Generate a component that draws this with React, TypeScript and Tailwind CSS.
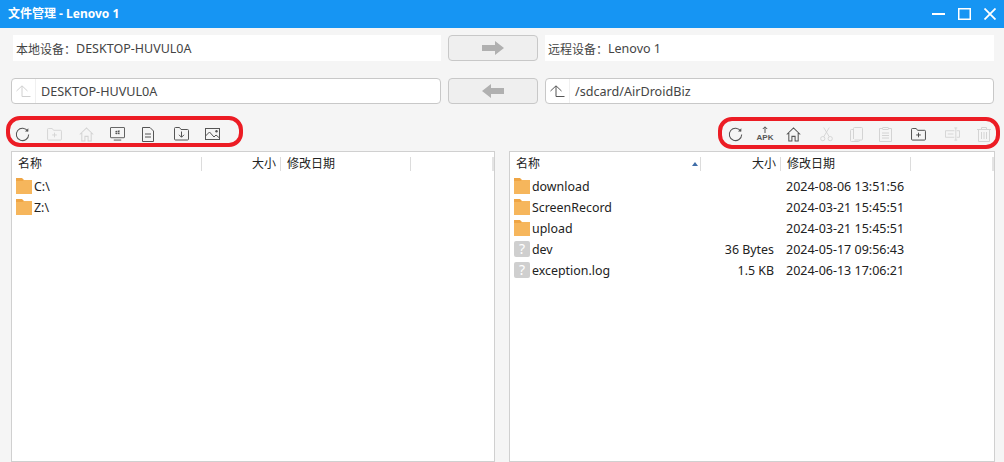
import React from 'react';

const font = { fontFamily: '"Noto Sans", "Noto Sans CJK SC", sans-serif' };

const Folder = () => (
  <svg width="16" height="16" viewBox="0 0 16 16" className="shrink-0">
    <path d="M0 0h6l2 2h8v14H0z" fill="#efa544" />
    <path d="M0 3h6.500l1.500-1h8v14H0z" fill="#f6b65c" />
  </svg>
);

const Unknown = () => (
  <div className="w-4 h-4 shrink-0 rounded-[2px] bg-[#cfcfcf] text-white text-[14px] leading-4 text-center">?</div>
);

const Refresh = () => (
  <svg width="15" height="15" viewBox="0 0 16 16" fill="none" stroke="#555" strokeWidth="1.1">
    <path d="M13.600 4.400A6.600 6.600 0 1 0 14.600 8" />
    <path d="M10.600 4.800h3.600V1.200z" fill="#555" stroke="none" />
  </svg>
);

const FolderPlus = ({ c }: { c: string }) => (
  <svg width="15" height="13" viewBox="0 0 16 14" fill="none" stroke={c} strokeWidth="1">
    <path d="M.5 12V1.500a1 1 0 0 1 1-1h4l1.500 2h7.500a1 1 0 0 1 1 1V12a1 1 0 0 1-1 1h-13a1 1 0 0 1-1-1z" />
    <path d="M5.500 7.500h5M8 5v5" />
  </svg>
);

const Home = ({ c }: { c: string }) => (
  <svg width="15" height="15" viewBox="0 0 16 16" fill="none" stroke={c} strokeWidth="1.1">
    <path d="M.8 8 8 1l7.200 7M3 6.500v8.500h3.300v-5h3.400v5H13V6.500" />
  </svg>
);

const Monitor = () => (
  <svg width="15" height="14" viewBox="0 0 16 15" fill="none" stroke="#555" strokeWidth="1">
    <rect x=".5" y=".5" width="15" height="11" rx=".5" />
    <path d="M4 14h8" />
    <path d="M5.800 4.200 7.600 4v1.600H5.800zM8.200 3.900l2-.3v2H8.200zM5.800 6.200h1.800v1.500L5.800 7.400zM8.200 6.200h2v1.700l-2-.3z" fill="#555" stroke="none" />
  </svg>
);

const Doc = () => (
  <svg width="12" height="15" viewBox="0 0 12 15" fill="none" stroke="#555" strokeWidth="1">
    <path d="M.5.500h7.500l3.500 3.500v10.500H.5z" />
    <path d="M3 7h6M3 10h6" />
  </svg>
);

const FolderDown = () => (
  <svg width="15" height="14" viewBox="0 0 15 14" fill="none" stroke="#555" strokeWidth="1">
    <path d="M.5 12V1.500a1 1 0 0 1 1-1h4l1.500 2h6.500a1 1 0 0 1 1 1V12a1 1 0 0 1-1 1h-12a1 1 0 0 1-1-1z" />
    <path d="M7.500 4.500v5.500M5 7.800l2.500 2.500L10 7.800" />
  </svg>
);

const Picture = () => (
  <svg width="15" height="12" viewBox="0 0 15 12" fill="none" stroke="#555" strokeWidth="1">
    <rect x=".5" y=".5" width="14" height="11" />
    <path d="M.5 8 4.500 4l4.500 5 2-2 3.500 3" />
    <circle cx="11.500" cy="3.200" r="1.200" fill="#555" stroke="none" />
  </svg>
);

const Apk = () => (
  <div className="w-[16px] h-[16px] flex flex-col items-center justify-end leading-none">
    <svg width="6" height="7" viewBox="0 0 6 7" fill="none" stroke="#555" strokeWidth="1">
      <path d="M3 7V1M.8 3 3 .8 5.200 3" />
    </svg>
    <span className="text-[8px] font-bold text-[#555] font-['Liberation_Sans'] mt-[1px]">APK</span>
  </div>
);

const Scissors = () => (
  <svg width="13" height="16" viewBox="0 0 14 16" fill="none" stroke="#d4d4d4" strokeWidth="1">
    <circle cx="3" cy="13" r="2.300" />
    <circle cx="11" cy="13" r="2.300" />
    <path d="M4 11 10 1M10 11 4 1" />
  </svg>
);

const Copy = () => (
  <svg width="13" height="15" viewBox="0 0 13 15" fill="none" stroke="#d4d4d4" strokeWidth="1">
    <path d="M3.500 12V1.500a1 1 0 0 1 1-1h7a1 1 0 0 1 1 1V12a1 1 0 0 1-1 1h-7" />
    <path d="M3.500 2.500h-2a1 1 0 0 0-1 1v10a1 1 0 0 0 1 1h7a1 1 0 0 0 1-1V13" />
  </svg>
);

const Paste = () => (
  <svg width="13" height="15" viewBox="0 0 13 15" fill="none" stroke="#d4d4d4" strokeWidth="1">
    <path d="M4 1.500H.5v13h12v-13H9" />
    <rect x="4" y=".5" width="5" height="2" />
    <path d="M3 6h7M3 8.500h7M3 11h7" />
  </svg>
);

const Rename = () => (
  <svg width="15" height="14" viewBox="0 0 16 14" fill="none" stroke="#d4d4d4" strokeWidth="1">
    <path d="M10 3.500H.5v7H10M12.500 3.500h3v7h-3" />
    <path d="M11.500 .5v13M10 .5h3M10 13.500h3M3 7h6" />
  </svg>
);

const Trash = () => (
  <svg width="14" height="15" viewBox="0 0 14 15" fill="none" stroke="#d4d4d4" strokeWidth="1">
    <path d="M0 2.500h14M4.500 2.500V.5h5v2M1.500 2.500v12h11v-12M4.500 5v7M7 5v7M9.500 5v7" />
  </svg>
);

const UpArrow = ({ c }: { c: string }) => (
  <svg width="15" height="12" viewBox="0 0 15 12" fill="none" stroke={c} strokeWidth="1">
    <path d="M.5 6 6 .8 11.500 6M6 1v10.500h8.500" />
  </svg>
);

const PathBox = ({ icon, text, w }: { icon: string; text: string; w: string }) => (
  <div className={`${w} h-[26px] flex items-center bg-white border border-[#c8c8c8] rounded-[4px]`}>
    <div className="w-[24px] h-full flex items-center justify-center border-r border-[#f0f0f0]">
      <UpArrow c={icon} />
    </div>
    <span className="ml-[5px] pt-[3px] text-[12.6px] text-[#444]">{text}</span>
  </div>
);

const BigArrow = ({ left }: { left?: boolean }) => (
  <button className="w-[90px] h-[26px] flex items-center justify-center bg-[#efefef] border border-[#c8c8c8] rounded-[4px]">
    <svg width="22" height="14" viewBox="0 0 22 14" className={left ? 'rotate-180' : ''}>
      <path d="M0 4h13V0l9 7-9 7v-4H0z" fill="#b0b0b0" />
    </svg>
  </button>
);

const Header = ({ sorted, size }: { sorted?: boolean; size: string }) => (
  <div className="flex h-[24px] pb-[1px] items-center text-[12px] text-[#222]">
    <div className="relative flex-1 h-[14px] flex items-center pl-[6px] border-r border-[#dcdcdc]">
      名称
      {sorted && <span className="absolute right-[2px] top-[5px] w-0 h-0 border-x-[3px] border-x-transparent border-b-[4px] border-b-[#3f6da8]" />}
    </div>
    <div className={`${size} h-[14px] flex items-center justify-end pr-[4px] border-r border-[#dcdcdc]`}>大小</div>
    <div className="w-[130px] h-[14px] flex items-center pl-[6px] border-r border-[#dcdcdc]">修改日期</div>
    <div className="w-[83px] h-[14px] border-r-2 border-[#e4e4e4]" />
  </div>
);

const Row = ({ name, file, size, date }: { name: string; file?: boolean; size?: string; date?: string }) => (
  <div className="flex h-[21px] items-center text-[12.4px] text-[#222]">
    <div className="flex-1 flex items-center gap-[2px] pl-[4px]">
      {file ? <Unknown /> : <Folder />}
      <span className="pt-[2px]">{name}</span>
    </div>
    <div className="w-[80px] pr-[7px] pt-[2px] text-right">{size}</div>
    <div className="w-[130px] pl-[5px] pt-[2px] text-[12.5px]">{date}</div>
    <div className="w-[83px]" />
  </div>
);

export default function App() {
  return (
    <div className="w-[1004px] h-[462px] overflow-hidden bg-[#f5f5f5] flex flex-col" style={font}>
      <div className="h-[28px] shrink-0 flex items-center justify-between bg-[#1695f3] pl-[8px] pr-[8px] text-white">
        <span className="text-[12px] font-bold">文件管理 - Lenovo 1</span>
        <div className="flex items-center gap-[13px]">
          <svg width="13" height="12" viewBox="0 0 13 12" stroke="#fff" strokeWidth="2"><path d="M0 6h13" /></svg>
          <svg width="13" height="12" viewBox="0 0 13 12" fill="none" stroke="#fff" strokeWidth="1.500"><rect x=".75" y=".75" width="11.500" height="10.500" /></svg>
          <svg width="12" height="12" viewBox="0 0 12 12" stroke="#fff" strokeWidth="1.800"><path d="M.5.5l11 11M11.500.5l-11 11" /></svg>
        </div>
      </div>

      <div className="flex gap-[7px] mt-[7px] pl-[13px] pr-[10px]">
        <div className="w-[428px] h-[26px] bg-white flex items-center pl-[3px] pt-[3px] text-[12px] text-[#444]">本地设备：<span className="text-[12.5px]">DESKTOP-HUVUL0A</span></div>
        <BigArrow />
        <div className="w-[449px] h-[26px] bg-white flex items-center pl-[3px] pt-[3px] text-[12px] text-[#444]">远程设备：<span className="text-[12.5px]">Lenovo 1</span></div>
      </div>

      <div className="flex gap-[7px] mt-[17px] pl-[11px] pr-[10px]">
        <PathBox icon="#d0d0d0" text="DESKTOP-HUVUL0A" w="w-[430px]" />
        <BigArrow left />
        <PathBox icon="#555" text="/sdcard/AirDroidBiz" w="w-[449px]" />
      </div>

      <div className="flex justify-between items-start mt-[12px] pl-[6px] pr-[4px]">
        <div className="w-[237px] h-[31px] flex items-center pl-[5px] pt-[5px] border-[4px] border-[#ec1c24] rounded-[14px]">
          <Refresh />
          <div className="ml-[17px]"><FolderPlus c="#d4d4d4" /></div>
          <div className="ml-[17px]"><Home c="#d4d4d4" /></div>
          <div className="ml-[16px]"><Monitor /></div>
          <div className="ml-[17px]"><Doc /></div>
          <div className="ml-[20px]"><FolderDown /></div>
          <div className="ml-[16px]"><Picture /></div>
        </div>
        <div className="w-[282px] h-[32px] mt-[1px] flex items-center pl-[6px] pt-[2px] border-[4px] border-[#ec1c24] rounded-[14px]">
          <Refresh />
          <div className="ml-[14px]"><Apk /></div>
          <div className="ml-[13px]"><Home c="#555" /></div>
          <div className="ml-[19px]"><Scissors /></div>
          <div className="ml-[17px]"><Copy /></div>
          <div className="ml-[16px]"><Paste /></div>
          <div className="ml-[19px]"><FolderPlus c="#444" /></div>
          <div className="ml-[19px]"><Rename /></div>
          <div className="ml-[17px]"><Trash /></div>
        </div>
      </div>

      <div className="flex-1 flex justify-between mt-[2px] pl-[11px] pr-[9px]">
        <div className="w-[484px] bg-white border border-[#d0d0d0]">
          <Header size="w-[79px]" />
          <Row name="C:\" />
          <Row name="Z:\" />
        </div>
        <div className="w-[486px] bg-white border border-[#d0d0d0]">
          <Header sorted size="w-[80px]" />
          <Row name="download" date="2024-08-06 13:51:56" />
          <Row name="ScreenRecord" date="2024-03-21 15:45:51" />
          <Row name="upload" date="2024-03-21 15:45:51" />
          <Row name="dev" file size="36 Bytes" date="2024-05-17 09:56:43" />
          <Row name="exception.log" file size="1.5 KB" date="2024-06-13 17:06:21" />
        </div>
      </div>
    </div>
  );
}
